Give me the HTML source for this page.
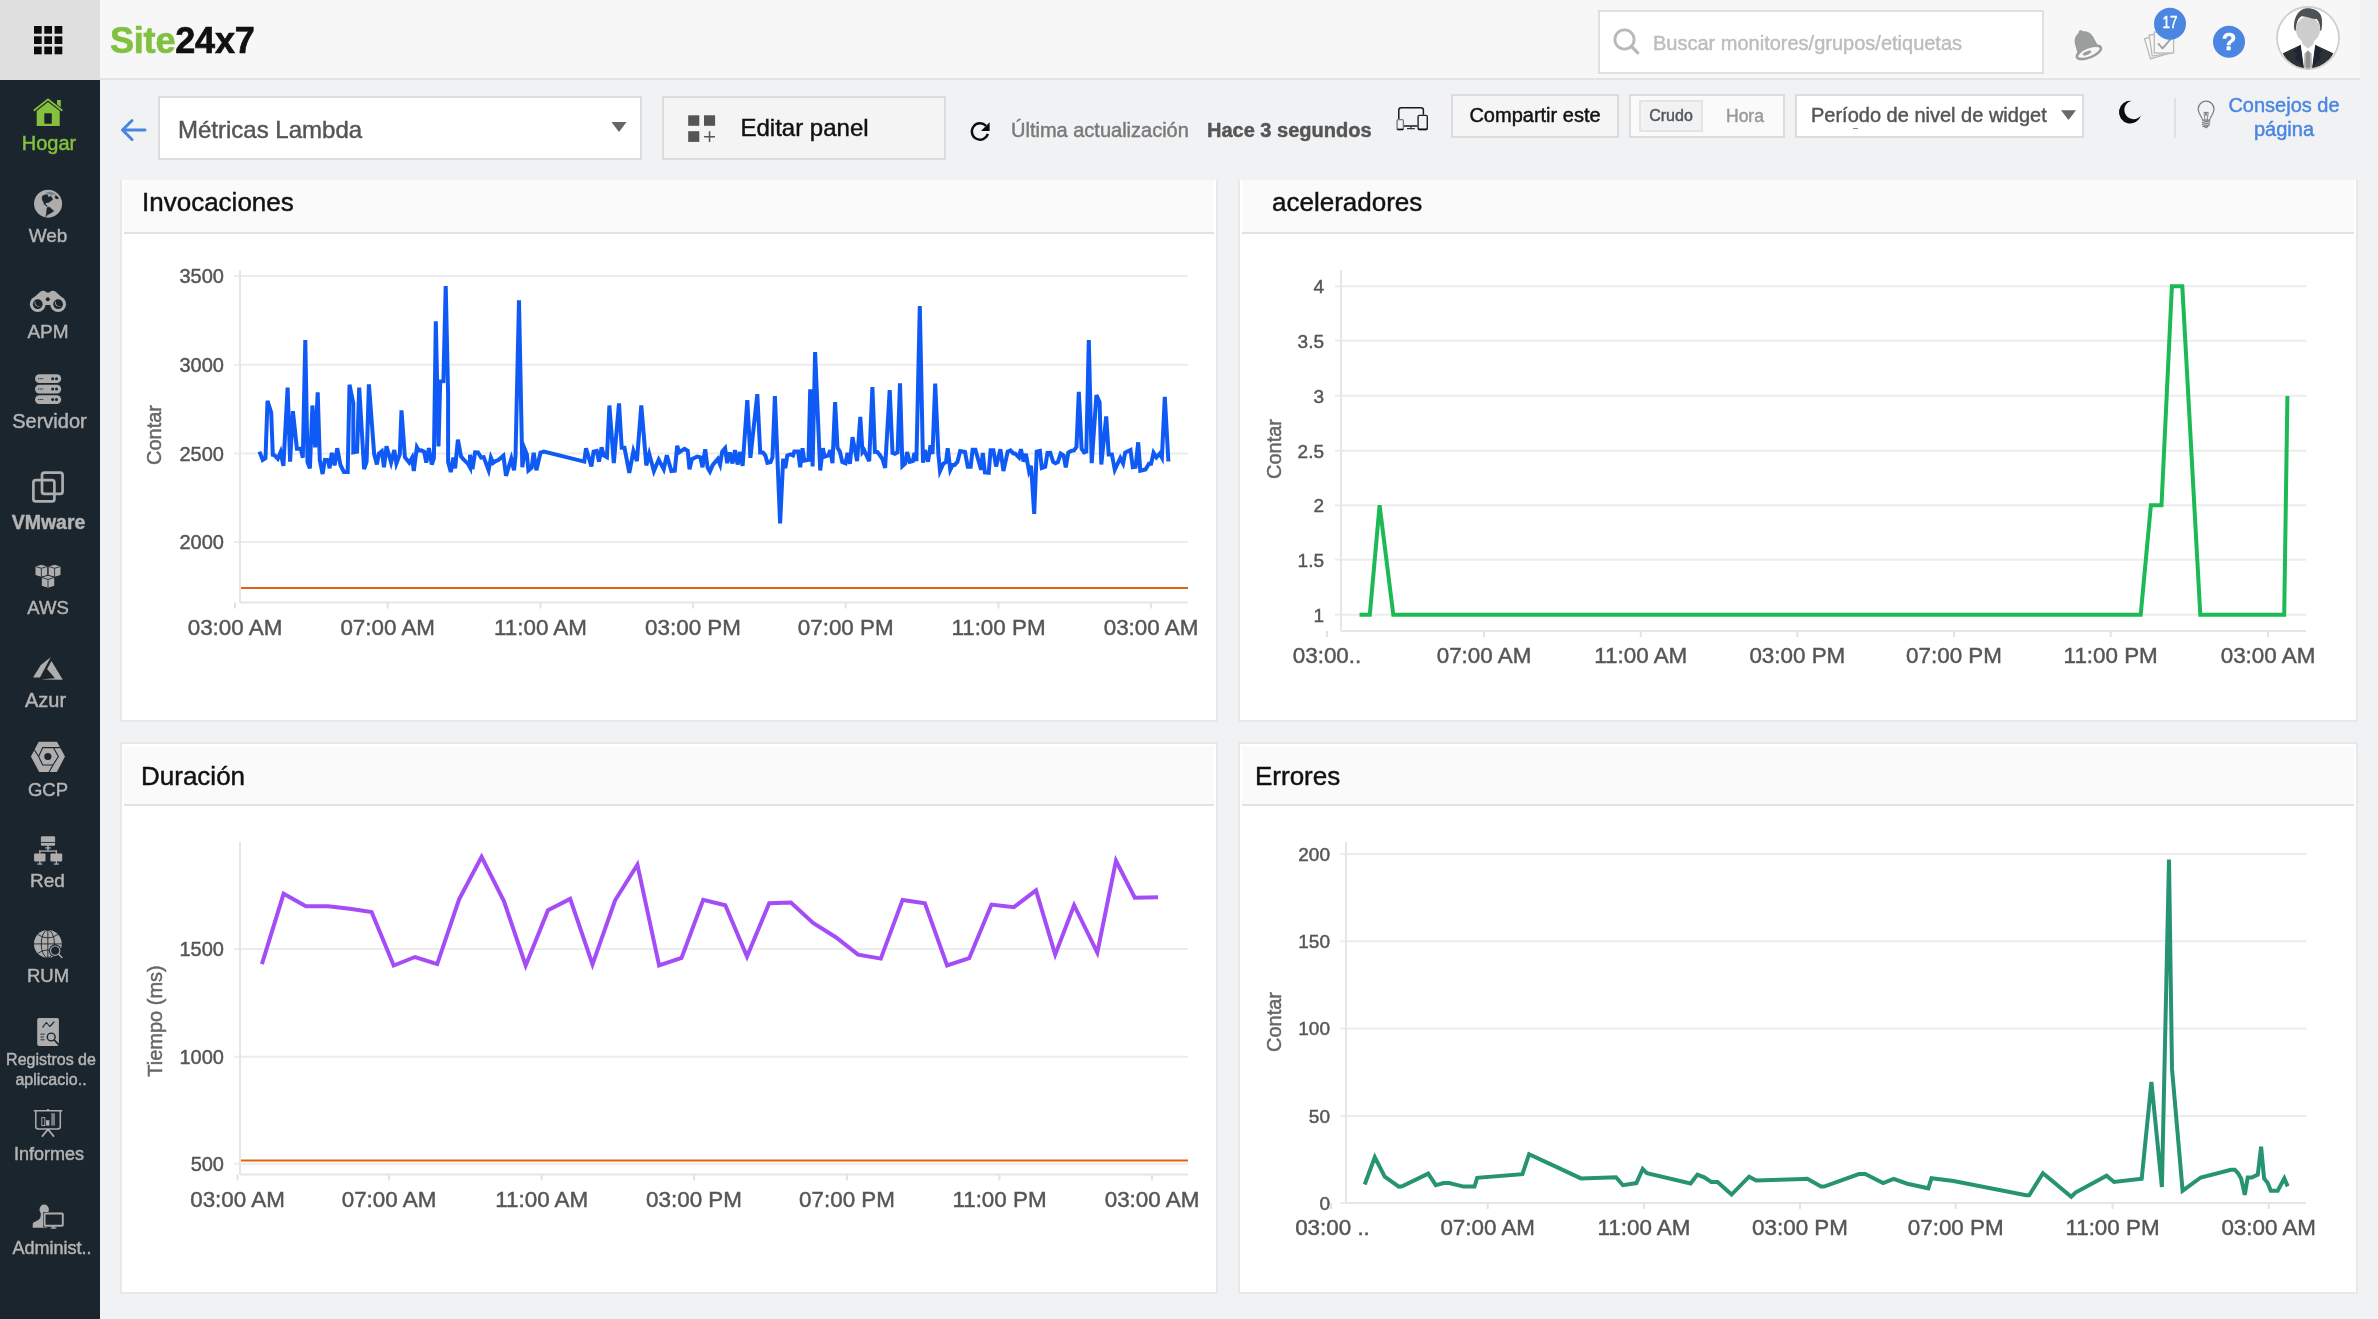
<!DOCTYPE html>
<html lang="es"><head><meta charset="utf-8"><title>Site24x7 - Métricas Lambda</title>
<style>
*{box-sizing:border-box}
html,body{margin:0;padding:0}
body{width:2378px;height:1319px;overflow:hidden;background:#f1f2f4;font-family:"Liberation Sans",sans-serif;position:relative;color:#111}
svg text{font-family:"Liberation Sans",sans-serif;stroke:currentColor;stroke-width:0.45px;paint-order:stroke fill}
#root{-webkit-text-stroke:0.45px}
#side{position:absolute;left:0;top:0;width:100px;height:1319px;background:#1b252e}
#apps{position:absolute;left:0;top:0;width:100px;height:80px;background:#dfdfdf}
.nav{position:absolute;left:0;width:100px;text-align:center;color:#b4b4b4;white-space:nowrap}
.nav svg{position:absolute}
.nav span{position:absolute;left:0;width:100px;text-align:center;display:block}
#hdr{position:absolute;left:100px;top:0;width:2260px;height:80px;background:#f7f7f7;border-bottom:2px solid #e4e4e4}
.abs{position:absolute}
.panel{position:absolute;border:2px solid #e8e8e8;background:#fff}
.ph{position:absolute;left:2px;top:2px;right:2px;height:60px;background:#fafafa;border-bottom:2px solid #e2e2e2;font-size:26px;line-height:56px;color:#111}
.cs{position:absolute}
.btn{position:absolute;border:2px solid #dcdcdc;white-space:nowrap}
</style></head><body><div id="root" style="position:absolute;left:0;top:0;width:2378px;height:1319px;will-change:transform">
<div id="side"><div id="apps">
<svg class="abs" style="left:33.8px;top:25.9px" width="29" height="29" viewBox="0 0 29 29"><g fill="#0c0c0c"><rect x="0.0" y="0.0" width="7.7" height="7.7"/><rect x="10.3" y="0.0" width="7.7" height="7.7"/><rect x="20.6" y="0.0" width="7.7" height="7.7"/><rect x="0.0" y="10.3" width="7.7" height="7.7"/><rect x="10.3" y="10.3" width="7.7" height="7.7"/><rect x="20.6" y="10.3" width="7.7" height="7.7"/><rect x="0.0" y="20.6" width="7.7" height="7.7"/><rect x="10.3" y="20.6" width="7.7" height="7.7"/><rect x="20.6" y="20.6" width="7.7" height="7.7"/></g></svg>
</div>
<svg class="abs" style="left:0;top:0" width="100" height="1319" viewBox="0 0 100 1319">
<!-- Hogar -->
<g fill="#86c13d"><path d="M48 102L36.7 111.1V125.9H59.7V111.1Z"/><path d="M57 100H60.8V107.3L57 104.2Z"/></g>
<path d="M34.3 110.2L48 99.3L61.8 110.2" fill="none" stroke="#86c13d" stroke-width="1.8" stroke-linecap="round" stroke-linejoin="miter"/>
<rect x="44.3" y="113.2" width="7.5" height="10.6" rx="0.8" fill="#1b252e"/>
<!-- Web globe -->
<circle cx="48.060" cy="203.650" r="14" fill="#adadad"/>
<path d="M46.0 192.6L50.4 191.7L53.8 192.9L56.3 194.8L53.2 194.3L52.1 195.7L49.3 194.3L47.4 194.0Z" fill="#1b252e" fill-opacity="0.350"/>
<g fill="#1b252e" stroke="#1b252e" stroke-width="0.400" stroke-linejoin="round"><path d="M42.6 195.7L46.0 194.5L47.6 194.8L48.2 197.3L50.2 196.2L51.8 197.3L52.7 199.6L50.4 201.3L48.8 202.4L45.7 203.0L45.3 204.6L44.0 204.4L43.7 202.4L42.3 200.1L42.0 197.6Z"/><path d="M55.5 195.4L57.2 196.2L58.7 198.5L56.1 198.9L54.9 197.6Z"/><path d="M44.8 204.4L46.5 205.1L47.4 206.5L46.0 205.9Z"/><path d="M47.1 207.4L49.3 206.9L51.3 208.8L53.9 211.1L51.0 213.1L47.6 214.7L45.8 216.8L46.4 213.1L46.7 210.2Z"/></g>
<!-- APM binoculars -->
<g fill="#aeaeae"><circle cx="37.740" cy="304.200" r="7.900"/><circle cx="58.130" cy="304.200" r="7.900"/><path d="M31.500 299.800L40.300 291.700Q43.300 289.800 45.900 291.700L46.400 292.400H49.600L50.100 291.700Q52.700 289.800 55.700 291.700L64.400 299.800L58 305.100H38Z"/></g>
<g fill="#1b252e"><circle cx="37.740" cy="304.200" r="4.850"/><circle cx="58.130" cy="304.200" r="4.850"/><circle cx="47.800" cy="299.200" r="2.050"/></g>
<g fill="#aeaeae"><path d="M35.44 300.56C33.14 303.70 35.74 308.10 41.50 306.38C37.14 307.20 34.54 304.80 35.44 300.56Z"/><path d="M55.83 300.56C53.53 303.70 56.13 308.10 61.89 306.38C57.53 307.20 54.93 304.80 55.83 300.56Z"/></g>
<!-- Servidor -->
<g fill="#adadad"><rect x="35" y="374.300" width="26.200" height="8.700" rx="4.350"/><rect x="35" y="384.700" width="26.200" height="8.700" rx="4.350"/><rect x="35" y="395.200" width="26.200" height="8.700" rx="4.350"/></g>
<g fill="#1b252e"><circle cx="52.700" cy="378.650" r="1.500"/><circle cx="56.500" cy="378.650" r="1.500"/><circle cx="52.700" cy="389.050" r="1.500"/><circle cx="56.500" cy="389.050" r="1.500"/><circle cx="52.700" cy="399.550" r="1.500"/><circle cx="56.500" cy="399.550" r="1.500"/></g>
<g stroke="#1b252e" stroke-width="0.900" stroke-dasharray="1.400 0.500"><path d="M38 378.650h5.400M38 389.050h5.400M38 399.550h5.400"/></g>
<!-- VMware -->
<g fill="none" stroke="#adadad" stroke-width="2.700"><rect x="42" y="472.600" width="20.600" height="21.300" rx="2.500"/><rect x="33.400" y="480.100" width="21" height="21.300" rx="2.500"/></g>
<!-- AWS cubes -->
<path d="M41.35 564.85L47.2 566.55V575.05L41.35 576.75L35.5 575.05V566.55Z" fill="#adadad"/><path d="M35.5 566.55L41.35 568.25L47.2 566.55M41.35 568.25V576.75" fill="none" stroke="#1b252e" stroke-width="0.85"/><path d="M54.58 564.85L60.5 566.55V575.05L54.58 576.75L48.65 575.05V566.55Z" fill="#adadad"/><path d="M48.65 566.55L54.58 568.25L60.5 566.55M54.58 568.25V576.75" fill="none" stroke="#1b252e" stroke-width="0.85"/><path d="M48.0 575.8L54.2 577.5V585.7L48.0 587.7L41.85 585.7V577.5Z" fill="#adadad" stroke="#1b252e" stroke-width="1.300" paint-order="stroke"/><path d="M41.85 577.5L48.0 579.4L54.2 577.5M48.0 579.4V587.7" fill="none" stroke="#1b252e" stroke-width="0.85"/>
<!-- Azur -->
<g fill="#adadad"><path d="M50.650 657.150L40.820 665L33.050 677.600L40 677.400Z"/><path d="M51.460 660.900L62.800 679.750L41.100 679.500Q48 678.500 55 678.300L47.100 669.100Z"/></g>
<!-- GCP -->
<path d="M31.700 756.500L39.100 742.500H56.600L64.200 756.500L56.300 771.300H39.700Z" fill="#adadad" stroke="#adadad" stroke-width="1.500" stroke-linejoin="round"/>
<g fill="none" stroke="#1b252e" stroke-width="1.100" stroke-linejoin="miter"><path d="M38.640 756.500L42.740 747.600H53.300L58.400 756.500L52.970 765H42.740Z"/><path d="M53.300 747.600H60.600M38.640 756.500L34.200 749.800M52.970 765L49 772.300"/></g>
<circle cx="47.850" cy="756.500" r="3.600" fill="#1b252e"/>
<!-- Red -->
<g fill="#adadad"><rect x="40.900" y="836.300" width="14.200" height="9.500" rx="1.300"/><rect x="34.100" y="853.500" width="11.400" height="8" rx="1"/><rect x="50.400" y="853.500" width="11.800" height="8" rx="1"/><rect x="47.300" y="845" width="1.400" height="6"/><rect x="45.200" y="847.300" width="5.600" height="1.300"/><rect x="39.200" y="850.400" width="17.800" height="1.300"/><rect x="39.200" y="850.400" width="1.300" height="4"/><rect x="55.700" y="850.400" width="1.300" height="4"/><rect x="39.200" y="861" width="1.300" height="3"/><rect x="55.700" y="861" width="1.300" height="3"/><rect x="37.300" y="863.400" width="5" height="1.300"/><rect x="53.800" y="863.400" width="5" height="1.300"/></g>
<path d="M40.900 842.450H55.100" stroke="#1b252e" stroke-width="0.900"/>
<!-- RUM -->
<circle cx="47.850" cy="943.900" r="13.900" fill="#adadad"/>
<g fill="none" stroke="#1b252e" stroke-width="0.900"><path d="M47.850 930V957.800M33.950 943.900H61.750M37.700 934.400Q47.850 941.500 58 934.400M37.700 953.400Q47.850 946.300 58 953.400"/><ellipse cx="47.850" cy="943.900" rx="6.600" ry="13.900"/></g>
<circle cx="55.200" cy="950.650" r="6.300" fill="#1b252e"/><circle cx="55.200" cy="950.650" r="4.700" fill="none" stroke="#adadad" stroke-width="1.100"/><path d="M58.800 954.300L61.900 957.500" stroke="#adadad" stroke-width="1.500" stroke-linecap="round"/>
<!-- Registros -->
<rect x="37.200" y="1018.100" width="21.700" height="27.800" rx="1.800" fill="#adadad"/>
<g fill="none" stroke="#1b252e" stroke-width="1.100" stroke-linecap="round" stroke-linejoin="round"><path d="M42.800 1027.200L46.300 1022.500L49.800 1026.500L54 1022"/><path d="M40.800 1034.200h3.400M40.800 1037h2.600M40.800 1039.800h3.400" stroke-width="0.900"/><circle cx="51.200" cy="1037" r="3.900" stroke-width="1.400"/><path d="M54.200 1040L58.300 1044.100" stroke-width="1.700"/></g>
<!-- Informes -->
<g fill="none" stroke="#adadad" stroke-width="1.500" stroke-linecap="round"><path d="M34.300 1110.800H61.800"/><path d="M35.800 1110.800V1126.400Q35.800 1128.900 38.300 1128.900H57.800Q60.300 1128.900 60.300 1126.400V1110.800"/><path d="M48 1129.400L42.400 1136.100M48 1129.400L53.600 1136.100" stroke-width="1.700"/><rect x="41.800" y="1117.600" width="3" height="8" stroke-width="0.900"/></g>
<g fill="#adadad"><rect x="46" y="1120.200" width="3.400" height="5.400"/><rect x="51.200" y="1113.200" width="3.800" height="12.400" fill-opacity="0.650"/><rect x="46.800" y="1109" width="2.400" height="1.600" rx="0.800"/></g>
<!-- Administ -->
<g fill="#adadad"><ellipse cx="44.200" cy="1209.600" rx="4.700" ry="5.100"/><path d="M40.800 1212.500Q41.500 1218.500 37.500 1220.500L33.800 1222.300Q32.700 1223 32.700 1224.500V1227.700H47V1212.500Z"/></g>
<rect x="43.100" y="1212" width="21.200" height="15.200" rx="1.200" fill="#1b252e"/><rect x="44.600" y="1213.500" width="18.200" height="12.200" rx="0.800" fill="#1b252e" stroke="#adadad" stroke-width="1.900"/>
<g fill="#adadad"><rect x="52.400" y="1225.700" width="2.200" height="2.200"/><rect x="50.800" y="1227.400" width="5.600" height="1.300"/></g>
</svg>
<div class="nav" style="top:95px;color:#86c13d"><span style="top:36px;left:-1px;font-size:20px;line-height:24px">Hogar</span></div>
<div class="nav" style="top:188px"><span style="top:35.5px;left:-2px;font-size:19px;line-height:24px">Web</span></div>
<div class="nav" style="top:288px"><span style="top:32px;left:-2px;font-size:19px;line-height:24px">APM</span></div>
<div class="nav" style="top:372px"><span style="top:37px;left:-0.5px;font-size:20px;line-height:24px">Servidor</span></div>
<div class="nav" style="top:470px"><span style="top:40px;left:-1.5px;font-size:19.5px;line-height:24px;font-weight:bold">VMware</span></div>
<div class="nav" style="top:562px"><span style="top:34px;left:-2px;font-size:18.5px;line-height:24px">AWS</span></div>
<div class="nav" style="top:656px"><span style="top:32px;left:-4.5px;font-size:20px;line-height:24px">Azur</span></div>
<div class="nav" style="top:740px"><span style="top:38px;left:-2px;font-size:18.5px;line-height:24px">GCP</span></div>
<div class="nav" style="top:836px"><span style="top:33px;left:-2.5px;font-size:19px;line-height:24px">Red</span></div>
<div class="nav" style="top:928px"><span style="top:36px;left:-2px;font-size:18.5px;line-height:24px">RUM</span></div>
<div class="nav" style="top:1016px"><span style="top:34px;left:1px;font-size:16px;line-height:19.5px">Registros de<br>aplicacio..</span></div>
<div class="nav" style="top:1108px"><span style="top:35px;left:-1px;font-size:18px;line-height:22px">Informes</span></div>
<div class="nav" style="top:1203px"><span style="top:34px;font-size:18px;line-height:22px;left:2px">Administ..</span></div>

</div>
<div id="hdr">
<div class="abs" style="left:10px;top:16px;font-size:36px;font-weight:bold;letter-spacing:-0.2px;line-height:50px;-webkit-text-stroke:0.7px"><span style="color:#82c13f;-webkit-text-stroke-color:#82c13f">Site</span><span style="color:#111;-webkit-text-stroke-color:#111">24x7</span></div>
<div class="abs" style="left:1498px;top:10px;width:446px;height:64px;background:#fff;border:2px solid #e0e0e0"></div>
<svg class="abs" style="left:1511px;top:26px" width="30" height="30" viewBox="0 0 30 30"><circle cx="13.5" cy="13.5" r="9.6" fill="none" stroke="#b9b9b9" stroke-width="2.8"/><path d="M20.5 20.5L26.8 26.8" stroke="#b9b9b9" stroke-width="3.2" stroke-linecap="round"/></svg>
<div class="abs" style="left:1553px;top:30px;font-size:20px;line-height:26px;color:#bdbdbd;white-space:nowrap">Buscar monitores/grupos/etiquetas</div>
<svg class="abs" style="left:1950px;top:0" width="410" height="80" viewBox="2050 0 410 80">
<!-- bell -->
<g transform="translate(-2.2 -0.3) rotate(-22 2088 45)">
<path d="M2088 29.500c1.300 0 2.200 0.900 2.300 2c4.600 1.200 7.200 5 7.700 10.500l1.100 10.300H2076.900l1.100-10.300c0.500-5.500 3.100-9.300 7.700-10.500c0.100-1.100 1-2 2.300-2z" fill="#9c9e9d"/>
<ellipse cx="2088" cy="53.300" rx="12.800" ry="5.100" fill="#f7f7f7" stroke="#9c9e9d" stroke-width="2.600"/>
<ellipse cx="2086" cy="53.200" rx="4.600" ry="1.700" fill="#9c9e9d"/>
</g>
<!-- checklist -->
<g fill="#f7f7f7" stroke="#b9b9b9" stroke-width="1.300">
<rect x="0" y="-21" width="19.300" height="21" transform="translate(2150.500 58.900) rotate(-16.600)"/>
<rect x="0" y="-21" width="19.300" height="21" transform="translate(2152.200 55.900) rotate(-8)"/>
<rect x="2154.300" y="32" width="19.300" height="21"/>
</g>
<path d="M2158.100 43.300L2162.500 48.300L2171.800 37.800" fill="none" stroke="#a0a0a0" stroke-width="1.800"/>
<circle cx="2170" cy="23.800" r="16" fill="#4a86e2"/>
<text x="2170" y="27.800" text-anchor="middle" font-size="16" fill="#fff" color="#fff" stroke-width="0.2" textLength="15" lengthAdjust="spacingAndGlyphs">17</text>
<!-- help -->
<circle cx="2229" cy="41.800" r="16" fill="#4a86e2"/>
<text x="2229" y="50.300" text-anchor="middle" font-size="24" font-weight="bold" fill="#fff" color="#fff">?</text>
</svg>
<!-- avatar -->
<svg class="abs" style="left:2176px;top:6px" width="64" height="64" viewBox="0 0 64 64">
<defs><clipPath id="avc"><circle cx="32" cy="32" r="30.200"/></clipPath></defs>
<circle cx="32" cy="32" r="31" fill="#fff" stroke="#cfcfcf" stroke-width="1.800"/>
<g clip-path="url(#avc)">
<path d="M24.800 38.700L6.900 47.200C10 55 20 62 32 63.500C44 62 54 55 57.300 47.200L39.100 38.700L36 62H28Z" fill="#2d3136"/>
<path d="M24.800 38.700L17.500 45.500L21.500 48.500L18.500 51.500L28 61.800L28.200 61.800Z" fill="#1c2530"/>
<path d="M39.100 38.700L46.500 45.500L42.500 48.500L45.500 51.500L36 61.800L35.800 61.800Z" fill="#1c2530"/>
<path d="M24.800 38.700L32 38.700L39.100 38.700L36 62H28Z" fill="#fff"/>
<path d="M26 34.200H38L37.700 37.800L32 42.700L26.300 37.800Z" fill="#cdcdcd"/>
<path d="M32 44.200L35.600 47.500L36.100 61.800H27.900L28.400 47.500Z" fill="#b5b5b5"/>
<path d="M32 44.200L33.900 47.500L34.200 61.800H29.800L30.100 47.500Z" fill="#8e9092"/>
<ellipse cx="32" cy="23.600" rx="12" ry="13" fill="#cdcdcd"/>
<path d="M18.800 24.500C17.500 22 17.500 15 20.500 9.500C23.500 4 28 2.300 32 2.300C37 2.300 42 4.500 44.500 8.500C46.500 12 46.600 20 45.200 24.500L44.200 25C44.400 20 43.500 16 40.500 12.800C36.500 14 31 10 25.500 10.300C22.500 11.500 20 17 19.800 25Z" fill="#4d5256"/>
</g>
</svg>

</div>
<div class="panel" style="left:120px;top:170px;width:1098px;height:552px">
<div class="ph"><span style="margin-left:18px;position:relative;top:0px">Invocaciones</span></div>
<svg class="cs" width="1098" height="552" viewBox="120 170 1098 552" style="left:-2px;top:-2px">
<path d="M234 276H1188" stroke="#ececec" stroke-width="2" fill="none"/>
<path d="M234 364.7H1188" stroke="#ececec" stroke-width="2" fill="none"/>
<path d="M234 453.6H1188" stroke="#ececec" stroke-width="2" fill="none"/>
<path d="M234 542H1188" stroke="#ececec" stroke-width="2" fill="none"/>
<path d="M240 270V602.5" stroke="#e6e6e6" stroke-width="2" fill="none"/>
<path d="M240 602.5H1188" stroke="#e6e6e6" stroke-width="2" fill="none"/>
<path d="M235 602.5v6" stroke="#e3e3e3" stroke-width="2" fill="none"/>
<path d="M387.7 602.5v6" stroke="#e3e3e3" stroke-width="2" fill="none"/>
<path d="M540.5 602.5v6" stroke="#e3e3e3" stroke-width="2" fill="none"/>
<path d="M693 602.5v6" stroke="#e3e3e3" stroke-width="2" fill="none"/>
<path d="M845.7 602.5v6" stroke="#e3e3e3" stroke-width="2" fill="none"/>
<path d="M998.5 602.5v6" stroke="#e3e3e3" stroke-width="2" fill="none"/>
<path d="M1151 602.5v6" stroke="#e3e3e3" stroke-width="2" fill="none"/>
<text x="224" y="283.2" text-anchor="end" font-size="20" fill="#555" color="#555">3500</text>
<text x="224" y="371.9" text-anchor="end" font-size="20" fill="#555" color="#555">3000</text>
<text x="224" y="460.8" text-anchor="end" font-size="20" fill="#555" color="#555">2500</text>
<text x="224" y="549.2" text-anchor="end" font-size="20" fill="#555" color="#555">2000</text>
<text x="235" y="635" text-anchor="middle" font-size="22.4" fill="#555" color="#555">03:00 AM</text>
<text x="387.7" y="635" text-anchor="middle" font-size="22.4" fill="#555" color="#555">07:00 AM</text>
<text x="540.5" y="635" text-anchor="middle" font-size="22.4" fill="#555" color="#555">11:00 AM</text>
<text x="693" y="635" text-anchor="middle" font-size="22.4" fill="#555" color="#555">03:00 PM</text>
<text x="845.7" y="635" text-anchor="middle" font-size="22.4" fill="#555" color="#555">07:00 PM</text>
<text x="998.5" y="635" text-anchor="middle" font-size="22.4" fill="#555" color="#555">11:00 PM</text>
<text x="1151" y="635" text-anchor="middle" font-size="22.4" fill="#555" color="#555">03:00 AM</text>
<text transform="translate(161 435) rotate(-90)" text-anchor="middle" font-size="20" fill="#666" color="#666">Contar</text>
<path d="M241 588H1188" stroke="#e0640f" stroke-width="2" fill="none"/>
<path d="M259.5 451.6 L262.7 460.0 L265.5 458.2 L267.5 400.8 L271.2 412.7 L272.8 454.8 L274.3 455.1 L277.8 458.7 L280.6 452.0 L283.4 465.9 L287.6 387.5 L290.1 461.6 L292.9 411.2 L296.9 448.7 L300.8 448.8 L302.8 457.8 L305.3 340.1 L307.5 462.0 L309.9 468.3 L312.4 405.5 L315.2 447.4 L317.7 392.3 L319.8 460.1 L322.6 474.0 L324.9 459.9 L328.1 460.1 L329.6 468.3 L331.8 452.9 L334.6 465.4 L337.2 448.2 L340.4 464.9 L343.9 471.9 L347.7 471.9 L349.5 384.7 L353.3 403.2 L353.3 452.3 L357.1 451.6 L359.2 387.5 L364.1 469.2 L366.6 462.0 L368.9 384.3 L374.2 454.4 L376.9 464.5 L378.9 453.5 L381.8 451.2 L384.0 467.3 L386.5 446.3 L391.1 462.6 L394.3 450.1 L396.4 463.5 L399.8 454.4 L401.5 410.3 L404.9 457.3 L409.3 462.7 L412.1 457.7 L413.8 471.1 L416.9 447.3 L418.8 450.5 L421.2 450.3 L424.1 451.6 L426.3 462.6 L428.9 448.2 L431.8 464.5 L433.9 458.2 L435.8 321.2 L438.5 446.5 L440.2 381.6 L443.4 381.2 L445.7 286.1 L448.1 393.8 L448.1 462.0 L450.8 472.1 L453.3 457.7 L455.1 468.3 L457.9 439.7 L461.0 456.3 L463.3 459.2 L468.1 463.9 L470.0 467.3 L470.0 454.8 L472.5 469.2 L475.1 452.3 L478.0 452.5 L481.1 457.5 L483.7 457.1 L488.6 470.2 L490.9 457.7 L493.1 462.9 L495.6 461.1 L498.4 460.1 L503.4 455.7 L506.0 475.8 L511.3 458.6 L514.0 470.2 L515.5 456.3 L519.0 300.3 L522.3 467.3 L524.8 449.2 L526.9 454.4 L528.4 470.5 L531.6 467.7 L533.7 452.9 L536.4 470.2 L540.5 452.5 L543.9 451.5 L584.3 461.6 L586.0 448.2 L591.4 466.4 L593.6 451.6 L596.7 450.9 L599.0 461.6 L601.6 447.3 L603.7 455.4 L606.9 457.2 L609.4 405.5 L613.8 463.1 L619.0 403.3 L621.7 447.8 L624.5 447.8 L629.3 473.0 L633.4 451.1 L636.9 461.2 L641.3 405.5 L646.3 465.4 L649.2 453.9 L653.9 471.1 L658.7 459.6 L663.7 469.2 L666.8 455.2 L671.4 471.0 L674.8 470.6 L677.2 445.7 L679.1 452.3 L684.6 448.9 L687.7 450.7 L689.5 469.2 L691.9 459.2 L697.2 456.5 L700.4 457.3 L702.5 467.3 L705.2 449.2 L707.6 467.7 L709.9 471.6 L712.8 464.9 L717.9 458.9 L720.1 464.5 L722.2 451.6 L725.1 448.2 L727.2 463.1 L729.8 452.6 L732.5 463.5 L735.0 450.1 L737.6 464.5 L740.1 452.0 L742.6 465.8 L747.3 400.2 L750.4 457.8 L757.3 394.2 L760.2 452.5 L763.0 452.5 L765.3 455.4 L767.4 462.8 L770.6 462.0 L772.5 457.3 L774.9 396.1 L780.1 523.3 L783.2 458.6 L785.3 468.3 L787.3 455.4 L790.5 454.3 L793.0 455.5 L794.3 451.6 L798.1 451.6 L800.2 467.3 L802.5 448.2 L804.3 460.7 L808.5 459.8 L810.2 389.4 L812.6 466.4 L815.1 352.1 L820.2 470.5 L822.9 448.2 L824.6 456.7 L828.4 455.4 L830.2 450.1 L832.5 463.1 L835.1 402.1 L837.5 447.8 L839.8 451.6 L842.3 462.0 L845.5 463.3 L847.6 452.9 L849.9 463.9 L852.5 437.2 L857.1 461.1 L860.3 416.9 L862.5 452.1 L864.1 450.2 L866.0 454.4 L869.2 461.1 L872.4 387.2 L874.9 451.8 L877.3 452.0 L879.6 454.8 L882.5 459.2 L885.1 467.9 L889.7 390.0 L892.5 452.9 L894.8 453.7 L897.6 452.2 L900.0 383.4 L902.4 466.1 L905.2 463.5 L907.1 452.0 L909.7 461.8 L912.8 461.1 L914.5 452.9 L916.4 461.1 L919.8 306.0 L923.0 462.6 L924.8 450.1 L928.0 461.6 L930.5 445.4 L932.5 454.0 L935.2 383.7 L938.4 454.4 L940.0 471.1 L943.2 463.9 L946.0 462.0 L947.7 448.2 L950.3 469.8 L952.7 464.9 L954.6 464.9 L957.4 462.0 L960.2 451.0 L965.0 452.0 L967.8 466.8 L970.7 466.8 L972.6 449.7 L975.4 449.7 L981.1 469.8 L982.8 452.9 L984.9 472.5 L988.7 472.9 L990.6 450.3 L993.4 450.3 L996.1 466.4 L1000.4 449.2 L1003.4 471.1 L1007.7 451.6 L1010.5 450.3 L1013.3 453.3 L1015.2 453.7 L1019.0 457.5 L1020.9 449.2 L1023.6 461.6 L1025.9 453.9 L1029.0 471.1 L1031.1 465.8 L1034.2 513.8 L1036.7 451.6 L1039.9 450.9 L1041.8 468.0 L1045.2 466.8 L1047.5 453.0 L1050.3 452.9 L1053.2 462.0 L1055.4 463.3 L1057.9 462.0 L1060.7 453.6 L1063.6 455.4 L1065.8 467.3 L1068.3 452.5 L1071.2 450.9 L1074.0 450.4 L1076.5 446.9 L1078.8 391.9 L1081.6 448.8 L1084.1 452.3 L1086.3 451.6 L1088.8 340.1 L1091.7 463.1 L1096.4 395.1 L1099.6 402.3 L1101.3 464.5 L1106.2 416.5 L1108.7 454.4 L1111.9 454.4 L1114.8 469.8 L1120.3 458.0 L1123.1 463.5 L1125.2 452.5 L1130.5 450.0 L1132.8 467.2 L1135.6 466.8 L1138.2 442.3 L1140.3 470.7 L1145.5 469.4 L1148.9 463.7 L1151.1 463.7 L1153.6 452.7 L1156.4 457.3 L1159.7 453.6 L1161.9 457.6 L1164.8 396.9 L1168.4 461.5" stroke="#0f5af5" stroke-width="4" fill="none" stroke-linejoin="miter"/>
</svg></div><div class="panel" style="left:1238px;top:170px;width:1120px;height:552px">
<div class="ph"><span style="margin-left:30px;position:relative;top:0px">aceleradores</span></div>
<svg class="cs" width="1120" height="552" viewBox="1238 170 1120 552" style="left:-2px;top:-2px">
<path d="M1335 286.3H2306" stroke="#ececec" stroke-width="2" fill="none"/>
<path d="M1335 340.7H2306" stroke="#ececec" stroke-width="2" fill="none"/>
<path d="M1335 395.7H2306" stroke="#ececec" stroke-width="2" fill="none"/>
<path d="M1335 450.7H2306" stroke="#ececec" stroke-width="2" fill="none"/>
<path d="M1335 505.2H2306" stroke="#ececec" stroke-width="2" fill="none"/>
<path d="M1335 559.8H2306" stroke="#ececec" stroke-width="2" fill="none"/>
<path d="M1335 614.8H2306" stroke="#ececec" stroke-width="2" fill="none"/>
<path d="M1341 270V631" stroke="#e6e6e6" stroke-width="2" fill="none"/>
<path d="M1341 631H2306" stroke="#e6e6e6" stroke-width="2" fill="none"/>
<path d="M1327 631v6" stroke="#e3e3e3" stroke-width="2" fill="none"/>
<path d="M1484 631v6" stroke="#e3e3e3" stroke-width="2" fill="none"/>
<path d="M1640.8 631v6" stroke="#e3e3e3" stroke-width="2" fill="none"/>
<path d="M1797.3 631v6" stroke="#e3e3e3" stroke-width="2" fill="none"/>
<path d="M1954 631v6" stroke="#e3e3e3" stroke-width="2" fill="none"/>
<path d="M2110.7 631v6" stroke="#e3e3e3" stroke-width="2" fill="none"/>
<path d="M2268 631v6" stroke="#e3e3e3" stroke-width="2" fill="none"/>
<text x="1324" y="293.1" text-anchor="end" font-size="19" fill="#555" color="#555">4</text>
<text x="1324" y="347.5" text-anchor="end" font-size="19" fill="#555" color="#555">3.5</text>
<text x="1324" y="402.5" text-anchor="end" font-size="19" fill="#555" color="#555">3</text>
<text x="1324" y="457.5" text-anchor="end" font-size="19" fill="#555" color="#555">2.5</text>
<text x="1324" y="512.0" text-anchor="end" font-size="19" fill="#555" color="#555">2</text>
<text x="1324" y="566.6" text-anchor="end" font-size="19" fill="#555" color="#555">1.5</text>
<text x="1324" y="621.6" text-anchor="end" font-size="19" fill="#555" color="#555">1</text>
<text x="1327" y="663" text-anchor="middle" font-size="22.4" fill="#555" color="#555">03:00..</text>
<text x="1484" y="663" text-anchor="middle" font-size="22.4" fill="#555" color="#555">07:00 AM</text>
<text x="1640.8" y="663" text-anchor="middle" font-size="22.4" fill="#555" color="#555">11:00 AM</text>
<text x="1797.3" y="663" text-anchor="middle" font-size="22.4" fill="#555" color="#555">03:00 PM</text>
<text x="1954" y="663" text-anchor="middle" font-size="22.4" fill="#555" color="#555">07:00 PM</text>
<text x="2110.7" y="663" text-anchor="middle" font-size="22.4" fill="#555" color="#555">11:00 PM</text>
<text x="2268" y="663" text-anchor="middle" font-size="22.4" fill="#555" color="#555">03:00 AM</text>
<text transform="translate(1281 449) rotate(-90)" text-anchor="middle" font-size="20" fill="#666" color="#666">Contar</text>
<path d="M1359.5 614.8 L1369.8 614.8 L1379.6 505.2 L1393.3 614.8 L2140.7 614.8 L2150.9 505.2 L2161.5 505.2 L2171.9 286.3 L2182.3 286.3 L2200.3 614.8 L2284.2 614.8 L2287.4 396.0" stroke="#1db954" stroke-width="4" fill="none" stroke-linejoin="miter"/>
</svg></div><div class="panel" style="left:120px;top:742px;width:1098px;height:552px">
<div class="ph"><span style="margin-left:17px;position:relative;top:1.5px">Duración</span></div>
<svg class="cs" width="1098" height="552" viewBox="120 742 1098 552" style="left:-2px;top:-2px">
<path d="M234 949H1188" stroke="#ececec" stroke-width="2" fill="none"/>
<path d="M234 1056.8H1188" stroke="#ececec" stroke-width="2" fill="none"/>
<path d="M234 1163.8H1188" stroke="#ececec" stroke-width="2" fill="none"/>
<path d="M240 842V1174.5" stroke="#e6e6e6" stroke-width="2" fill="none"/>
<path d="M240 1174.5H1188" stroke="#e6e6e6" stroke-width="2" fill="none"/>
<path d="M237.5 1174.5v6" stroke="#e3e3e3" stroke-width="2" fill="none"/>
<path d="M389 1174.5v6" stroke="#e3e3e3" stroke-width="2" fill="none"/>
<path d="M541.7 1174.5v6" stroke="#e3e3e3" stroke-width="2" fill="none"/>
<path d="M694 1174.5v6" stroke="#e3e3e3" stroke-width="2" fill="none"/>
<path d="M847 1174.5v6" stroke="#e3e3e3" stroke-width="2" fill="none"/>
<path d="M999.5 1174.5v6" stroke="#e3e3e3" stroke-width="2" fill="none"/>
<path d="M1152 1174.5v6" stroke="#e3e3e3" stroke-width="2" fill="none"/>
<text x="224" y="956.2" text-anchor="end" font-size="20" fill="#555" color="#555">1500</text>
<text x="224" y="1064.0" text-anchor="end" font-size="20" fill="#555" color="#555">1000</text>
<text x="224" y="1171.0" text-anchor="end" font-size="20" fill="#555" color="#555">500</text>
<text x="237.5" y="1207" text-anchor="middle" font-size="22.4" fill="#555" color="#555">03:00 AM</text>
<text x="389" y="1207" text-anchor="middle" font-size="22.4" fill="#555" color="#555">07:00 AM</text>
<text x="541.7" y="1207" text-anchor="middle" font-size="22.4" fill="#555" color="#555">11:00 AM</text>
<text x="694" y="1207" text-anchor="middle" font-size="22.4" fill="#555" color="#555">03:00 PM</text>
<text x="847" y="1207" text-anchor="middle" font-size="22.4" fill="#555" color="#555">07:00 PM</text>
<text x="999.5" y="1207" text-anchor="middle" font-size="22.4" fill="#555" color="#555">11:00 PM</text>
<text x="1152" y="1207" text-anchor="middle" font-size="22.4" fill="#555" color="#555">03:00 AM</text>
<text transform="translate(162 1021) rotate(-90)" text-anchor="middle" font-size="20" fill="#666" color="#666">Tiempo (ms)</text>
<path d="M241 1160.5H1188" stroke="#e0640f" stroke-width="2" fill="none"/>
<path d="M261.9 964.1 L283.6 893.8 L305.9 906.2 L328.1 906.2 L349.8 908.8 L371.6 912.1 L393.7 965.5 L415.0 957.0 L437.2 964.1 L459.1 899.3 L481.6 856.8 L504.0 901.3 L525.7 965.5 L548.0 910.2 L570.2 898.9 L592.5 964.5 L615.1 900.3 L637.4 864.7 L659.1 965.5 L681.5 958.0 L703.2 899.9 L725.3 905.2 L747.0 956.6 L769.2 903.2 L790.9 902.5 L813.1 923.0 L835.8 937.2 L858.1 954.6 L880.8 958.6 L902.6 899.9 L924.9 903.2 L947.1 965.5 L969.2 958.2 L991.5 904.6 L1013.9 907.2 L1036.0 890.4 L1055.2 954.6 L1074.1 905.2 L1097.3 952.7 L1116.0 860.8 L1134.8 897.7 L1158.1 897.3" stroke="#a44cf6" stroke-width="4" fill="none" stroke-linejoin="miter"/>
</svg></div><div class="panel" style="left:1238px;top:742px;width:1120px;height:552px">
<div class="ph"><span style="margin-left:13px;position:relative;top:1.5px">Errores</span></div>
<svg class="cs" width="1120" height="552" viewBox="1238 742 1120 552" style="left:-2px;top:-2px">
<path d="M1340 854H2306" stroke="#ececec" stroke-width="2" fill="none"/>
<path d="M1340 941.3H2306" stroke="#ececec" stroke-width="2" fill="none"/>
<path d="M1340 1028.6H2306" stroke="#ececec" stroke-width="2" fill="none"/>
<path d="M1340 1116H2306" stroke="#ececec" stroke-width="2" fill="none"/>
<path d="M1340 1203H2306" stroke="#ececec" stroke-width="2" fill="none"/>
<path d="M1346 842V1203" stroke="#e6e6e6" stroke-width="2" fill="none"/>
<path d="M1346 1203H2306" stroke="#e6e6e6" stroke-width="2" fill="none"/>
<path d="M1331 1203v6" stroke="#e3e3e3" stroke-width="2" fill="none"/>
<path d="M1487.7 1203v6" stroke="#e3e3e3" stroke-width="2" fill="none"/>
<path d="M1644 1203v6" stroke="#e3e3e3" stroke-width="2" fill="none"/>
<path d="M1800 1203v6" stroke="#e3e3e3" stroke-width="2" fill="none"/>
<path d="M1955.7 1203v6" stroke="#e3e3e3" stroke-width="2" fill="none"/>
<path d="M2112.5 1203v6" stroke="#e3e3e3" stroke-width="2" fill="none"/>
<path d="M2268.7 1203v6" stroke="#e3e3e3" stroke-width="2" fill="none"/>
<text x="1330" y="860.8" text-anchor="end" font-size="19" fill="#555" color="#555">200</text>
<text x="1330" y="948.1" text-anchor="end" font-size="19" fill="#555" color="#555">150</text>
<text x="1330" y="1035.4" text-anchor="end" font-size="19" fill="#555" color="#555">100</text>
<text x="1330" y="1122.8" text-anchor="end" font-size="19" fill="#555" color="#555">50</text>
<text x="1330" y="1209.8" text-anchor="end" font-size="19" fill="#555" color="#555">0</text>
<text x="1332.5" y="1235" text-anchor="middle" font-size="22.4" fill="#555" color="#555">03:00 ..</text>
<text x="1487.7" y="1235" text-anchor="middle" font-size="22.4" fill="#555" color="#555">07:00 AM</text>
<text x="1644" y="1235" text-anchor="middle" font-size="22.4" fill="#555" color="#555">11:00 AM</text>
<text x="1800" y="1235" text-anchor="middle" font-size="22.4" fill="#555" color="#555">03:00 PM</text>
<text x="1955.7" y="1235" text-anchor="middle" font-size="22.4" fill="#555" color="#555">07:00 PM</text>
<text x="2112.5" y="1235" text-anchor="middle" font-size="22.4" fill="#555" color="#555">11:00 PM</text>
<text x="2268.7" y="1235" text-anchor="middle" font-size="22.4" fill="#555" color="#555">03:00 AM</text>
<text transform="translate(1281 1022) rotate(-90)" text-anchor="middle" font-size="20" fill="#666" color="#666">Contar</text>
<path d="M1364.7 1184.5 L1374.8 1157.2 L1384.7 1176.7 L1398.8 1186.6 L1402.1 1186.2 L1428.2 1173.6 L1435.8 1185.2 L1443.6 1183.1 L1449.2 1183.1 L1463.5 1186.6 L1474.5 1186.6 L1477.2 1177.8 L1522.4 1174.2 L1529.1 1154.2 L1580.9 1178.4 L1616.0 1177.2 L1622.9 1185.2 L1636.4 1183.1 L1642.7 1169.0 L1646.9 1173.2 L1690.6 1183.5 L1697.4 1174.6 L1704.3 1177.4 L1711.2 1182.0 L1717.5 1182.0 L1731.6 1194.6 L1749.1 1176.7 L1756.2 1180.5 L1807.3 1178.8 L1821.0 1186.6 L1824.1 1186.6 L1858.9 1174.0 L1865.2 1174.0 L1883.1 1183.1 L1893.6 1178.8 L1907.3 1183.7 L1928.3 1188.3 L1931.5 1178.2 L1953.5 1181.0 L2026.1 1195.2 L2029.2 1195.2 L2042.9 1173.2 L2071.3 1196.7 L2075.5 1192.5 L2106.6 1175.7 L2114.0 1182.0 L2141.7 1178.8 L2151.4 1081.9 L2161.9 1187.0 L2169.0 859.6 L2172.0 1068.9 L2182.6 1190.7 L2200.8 1177.5 L2231.0 1169.7 L2234.8 1169.7 L2238.2 1173.5 L2241.1 1178.4 L2244.8 1194.8 L2247.7 1177.5 L2251.8 1177.5 L2257.8 1174.6 L2261.1 1146.7 L2264.1 1178.4 L2267.6 1182.7 L2270.8 1190.7 L2277.7 1190.7 L2284.3 1178.4 L2287.7 1186.4" stroke="#269373" stroke-width="4" fill="none" stroke-linejoin="miter"/>
</svg></div>
<div class="abs" style="left:100px;top:80px;width:2278px;height:100px;background:#f1f2f4"></div>
<svg class="abs" style="left:119.5px;top:117.5px" width="28" height="24" viewBox="0 0 28 24"><path d="M25 12H3M12 2.500L2.500 12L12 21.500" fill="none" stroke="#4a86e0" stroke-width="3" stroke-linecap="round" stroke-linejoin="round"/></svg>
<div class="btn" style="left:158px;top:96px;width:484px;height:64px;background:#fff;font-size:24px;line-height:64px;color:#555;padding-left:18px">Métricas Lambda</div>
<svg class="abs" style="left:611px;top:122px" width="16" height="11" viewBox="0 0 16 11"><path d="M0.500 0H15.500L8 10Z" fill="#666"/></svg>
<div class="btn" style="left:662px;top:96px;width:284px;height:64px;background:#f4f4f5;font-size:24px;line-height:60px;color:#111;padding-left:76.5px">Editar panel</div>
<svg class="abs" style="left:686px;top:113px" width="32" height="32" viewBox="686 113 32 32"><g fill="#555"><rect x="688.200" y="115.300" width="11.100" height="10.500"/><rect x="704" y="115.300" width="11.100" height="10.500"/><rect x="688.200" y="131.200" width="11.100" height="10.700"/><path d="M708.800 131.200h1.500v4.700h4.700v1.500h-4.700v4.700h-1.500v-4.700h-4.700v-1.500h4.700z"/></g></svg>
<svg class="abs" style="left:966px;top:117px" width="28" height="28" viewBox="966 117 28 28"><path d="M987.870 133.970A8.200 8.200 0 1 1 985.950 125.800" fill="none" stroke="#0c0c0c" stroke-width="2.400"/><path d="M989.600 122.300V130.900H981Z" fill="#0c0c0c"/></svg>
<div class="abs" style="left:1011px;top:118px;font-size:20px;line-height:24px;color:#7a7a7a;white-space:nowrap">Última actualización</div>
<div class="abs" style="left:1207px;top:118px;font-size:20px;line-height:24px;color:#555;font-weight:bold;white-space:nowrap">Hace 3 segundos</div>
<svg class="abs" style="left:1393px;top:104px" width="38" height="30" viewBox="1393 104 38 30">
<g fill="none" stroke-linejoin="round"><path d="M1398.800 119.100V110.100Q1398.800 107.700 1401.200 107.700H1421Q1423.400 107.700 1423.400 110.100V114.800M1403.400 125.900H1417.500" stroke="#151b22" stroke-width="1.500"/><path d="M1410.900 125.900V128.600M1407 128.700H1414.800" stroke="#333" stroke-width="1.200"/>
<rect x="1397.100" y="119.600" width="6.300" height="10" rx="1.200" stroke="#777" stroke-width="1.300"/><path d="M1397.300 129.400H1403.200" stroke="#111" stroke-width="1.600"/>
<rect x="1418.100" y="115.400" width="9.200" height="14.200" rx="1.300" stroke="#1a222b" stroke-width="1.400"/><path d="M1418.300 129.300H1427.200" stroke="#111" stroke-width="1.700"/></g></svg>
<div class="btn" style="left:1451px;top:94px;width:168px;height:44px;background:#f5f5f6;font-size:20px;line-height:38px;color:#111;text-align:center">Compartir este</div>
<div class="btn" style="left:1629px;top:94px;width:156px;height:44px;background:#fafafa"></div>
<div class="btn" style="left:1639px;top:100px;width:64px;height:32px;background:#f1f2f4;border-color:#e4e4e4;font-size:16px;line-height:27px;color:#555;text-align:center">Crudo</div>
<div class="abs" style="left:1726px;top:104px;font-size:17.500px;line-height:24px;color:#999">Hora</div>
<div class="btn" style="left:1795px;top:94px;width:289px;height:44px;background:#fff;font-size:20px;line-height:38px;color:#555;padding-left:14px">Período de nivel de widget</div>
<svg class="abs" style="left:2060px;top:110px" width="17" height="11" viewBox="0 0 17 11"><path d="M1 0.300H16L8.500 10Z" fill="#686868"/></svg><div class="abs" style="left:1853px;top:127.500px;width:5px;height:1.500px;background:#8a8a8a"></div>
<svg class="abs" style="left:2114px;top:96px" width="32" height="32" viewBox="2114 96 32 32"><path d="M2131.200 100.900A11.300 11.300 0 1 0 2141 115.600A9.300 9.300 0 1 1 2131.200 100.900Z" fill="#0c0c0c"/></svg>
<div class="abs" style="left:2174px;top:98px;width:2px;height:40px;background:#e0e0e0"></div>
<svg class="abs" style="left:2194px;top:98px" width="24" height="32" viewBox="2194 98 24 32"><g fill="none" stroke="#7a7a7a" stroke-width="1.200" stroke-linecap="round" stroke-linejoin="round"><path d="M2202.600 120.200C2202.200 116.500 2198.200 114.500 2198.200 109.100A7.900 7.900 0 0 1 2214 109.100C2214 114.500 2210 116.500 2209.600 120.200Z"/><path d="M2204.900 119.800L2204 112.400H2208.200L2207.300 119.800M2205.400 112.600L2205.900 115.500M2206.800 112.600L2206.300 115.500" stroke-width="0.9"/><path d="M2202.400 122.400L2209.800 120.900M2202.400 124.400L2209.800 122.900M2202.800 126.300L2209.600 124.900M2204.300 126.600L2206.100 127.800L2208 126.300"/></g></svg>
<div class="abs" style="left:2219px;top:93px;width:130px;font-size:20px;line-height:24px;color:#4a86e0;text-align:center">Consejos de página</div>

</div></body></html>
